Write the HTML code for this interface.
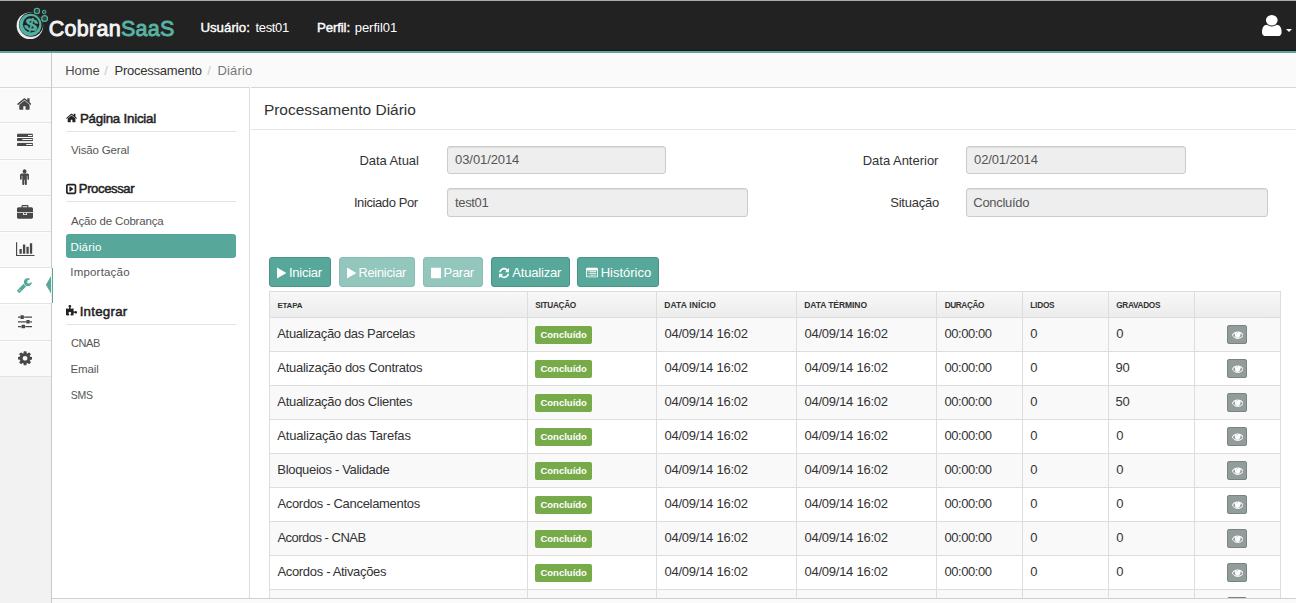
<!DOCTYPE html>
<html lang="pt-BR"><head><meta charset="utf-8"><title>CobranSaaS</title>
<style>
*{box-sizing:border-box;margin:0;padding:0}
html,body{width:1296px;height:603px;overflow:hidden;background:#fff}
body{font-family:"Liberation Sans",sans-serif;font-size:13px;color:#333;position:relative}
.abs{position:absolute}
svg.i{display:block;position:absolute}
.t{position:absolute;white-space:nowrap;line-height:1}
#top{left:0;top:0;width:1296px;height:1px;background:#adadad}
#hdr{left:0;top:1px;width:1296px;height:50px;background:#222;border-bottom:1px solid #1b1717}
#hline{left:0;top:51px;width:1296px;height:2px;background:#57a89a}
#ribbon{left:0;top:53px;width:1296px;height:35px;background:#fafafa;border-top:1px solid #fff;border-bottom:1px solid #d6d6d6}
#left{left:0;top:88px;width:51px;height:515px;background:#f2f2f2}
#vline{left:51px;top:53px;width:1px;height:550px;background:#c9c9c9}
.nv{position:absolute;left:0;width:51px;background:#fafafa;border-top:1px solid #fdfdfd;border-bottom:1px solid #e3e3e3}
.nv.on{background:#fff;border-top-color:#fff}
#sub{left:52px;top:88px;width:198px;height:510px;background:#fff;border-right:1px solid #ddd}
#main{left:250px;top:88px;width:1046px;height:510px;background:#fff}
#foot{left:52px;top:598px;width:1244px;height:5px;background:#fafafa;border-top:1px solid #d0d0d0}
.sl{position:absolute;left:66px;width:170px;height:1px;background:#e3e3e3}
.inp{position:absolute;height:28px;background:#eee;border:1px solid #ccc;border-radius:3px;box-shadow:inset 0 1px 1px rgba(0,0,0,.075)}
.btn{position:absolute;top:257px;height:30px;border-radius:3px;background:#57a89a;border:1px solid #4a9486}
.btn.dis{background:#93c6bc;border-color:#8abdb3}
#tbl{left:269px;top:291px;width:1012px;height:320px;border-left:1px solid #ddd;border-top:1px solid #ddd}
.th{position:absolute;top:292px;height:26px;background:linear-gradient(#f8f8f8,#ececec);border-right:1px solid #ddd;border-bottom:1px solid #ddd}
.td{position:absolute;height:34px;border-right:1px solid #ddd;border-bottom:1px solid #ddd}
.odd{background:#f9f9f9}
.bdg{position:absolute;width:57px;height:18px;background:#77aa48;border-radius:2px}
.eye{position:absolute;width:20px;height:19px;background:#929c9a;border:1px solid #7a8583;border-radius:2px}
</style></head>
<body>
<header>
<div class="abs" id="hdr"></div>
<div class="abs" id="top"></div>
<div class="abs" id="hline"></div>
<svg class="abs" style="left:14px;top:6px" width="36" height="42" viewBox="0 0 36 42">
<circle cx="15.9" cy="19.75" r="13.3" fill="#ececec"/>
<circle cx="17" cy="18.7" r="12.1" fill="#222"/>
<circle cx="16.4" cy="18.95" r="11.1" fill="#52b0a0"/>
<circle cx="17.1" cy="18.3" r="8.2" fill="#222"/>
<text x="0" y="5.9" text-anchor="middle" transform="translate(17.3 18.5) rotate(14) scale(1.4 1)" font-family="Liberation Sans, sans-serif" font-weight="bold" font-size="17" fill="#52b0a0" stroke="#52b0a0" stroke-width="0.35">$</text>
<circle cx="22.9" cy="5" r="2.7" fill="#2c4a45" stroke="#52b0a0" stroke-width="1.1"/>
<circle cx="30.2" cy="6" r="1.8" fill="#2c4a45" stroke="#52b0a0" stroke-width="1"/>
<circle cx="30.6" cy="12.5" r="2.9" fill="#2c4a45" stroke="#52b0a0" stroke-width="1.2"/>
</svg>
<div class="t" id="logo" style="left:48.7px;top:19px;font-size:21.5px;color:#f4f4f4;letter-spacing:0.29px;-webkit-text-stroke:0.9px #f4f4f4">Cobran<span style="color:#57b3a2;-webkit-text-stroke:0.9px #57b3a2">SaaS</span></div>
<div class="t" style="left:200.4px;top:21px;font-size:13.3px;-webkit-text-stroke:0.4px #fff;letter-spacing:-0.01px;color:#fff;">Usuário:</div>
<div class="t" style="left:255.5px;top:21px;font-size:13px;letter-spacing:-0.35px;color:#fff;">test01</div>
<div class="t" style="left:316.9px;top:21px;font-size:13.3px;-webkit-text-stroke:0.4px #fff;letter-spacing:-0.13px;color:#fff;">Perfil:</div>
<div class="t" style="left:354.7px;top:21px;font-size:13px;letter-spacing:-0.02px;color:#fff;">perfil01</div>
<svg class="i" width="19.6" height="21.2" viewBox="0 -1408 1280 1536" preserveAspectRatio="none" style="left:1262.2px;top:15.3px"><path fill="#fff" transform="scale(1,-1)" d="M1280 137Q1280 28 1217.5 -50.0Q1155 -128 1067 -128H213Q125 -128 62.5 -50.0Q0 28 0 137Q0 222 8.5 297.5Q17 373 40.0 449.5Q63 526 98.5 580.5Q134 635 192.5 669.5Q251 704 327 704Q458 576 640.0 576.0Q822 576 953 704Q1029 704 1087.5 669.5Q1146 635 1181.5 580.5Q1217 526 1240.0 449.5Q1263 373 1271.5 297.5Q1280 222 1280 137ZM911.5 1295.5Q1024 1183 1024.0 1024.0Q1024 865 911.5 752.5Q799 640 640.0 640.0Q481 640 368.5 752.5Q256 865 256.0 1024.0Q256 1183 368.5 1295.5Q481 1408 640.0 1408.0Q799 1408 911.5 1295.5Z"/></svg>
<div class="abs" style="left:1286px;top:29px;width:0;height:0;border-left:3px solid transparent;border-right:3px solid transparent;border-top:3px solid #fff"></div>
</header>
<div id="ribbon-wrap">
<div class="abs" id="ribbon"></div>
<div class="t" style="left:65.3px;top:64px;font-size:13px;letter-spacing:-0.11px;color:#4c4c4c;">Home</div>
<div class="t" style="left:104.3px;top:64px;font-size:13px;letter-spacing:0.00px;color:#ccc;">/</div>
<div class="t" style="left:114.5px;top:64px;font-size:13px;letter-spacing:-0.23px;color:#333;">Processamento</div>
<div class="t" style="left:207.2px;top:64px;font-size:13px;letter-spacing:0.00px;color:#ccc;">/</div>
<div class="t" style="left:217.6px;top:64px;font-size:13px;letter-spacing:0.12px;color:#777;">Diário</div>
</div>
<nav>
<div class="abs" id="left"></div>
<div class="nv" style="top:88px;height:35px"></div>
<svg class="i" width="14.86" height="16" viewBox="0 -1536 1664 1792" style="left:16.62px;top:96.06px;"><path fill="#484848" transform="scale(1,-1)" d="M1408 544V64Q1408 38 1389.0 19.0Q1370 0 1344 0H960V384H704V0H320Q294 0 275.0 19.0Q256 38 256 64V544Q256 545 256.5 547.0Q257 549 257 550L832 1024L1407 550Q1408 548 1408 544ZM1631 613 1569 539Q1561 530 1548 528H1545Q1532 528 1524 535L832 1112L140 535Q128 527 116 528Q103 530 95 539L33 613Q25 623 26.0 636.5Q27 650 37 658L756 1257Q788 1283 832.0 1283.0Q876 1283 908 1257L1152 1053V1248Q1152 1262 1161.0 1271.0Q1170 1280 1184 1280H1376Q1390 1280 1399.0 1271.0Q1408 1262 1408 1248V840L1627 658Q1637 650 1638.0 636.5Q1639 623 1631 613Z"/></svg>
<div class="nv" style="top:123px;height:37px"></div>
<svg class="i" style="left:17px;top:133px" width="16" height="13" viewBox="0 0 16 13">
<rect x="0.5" y="0" width="15" height="1" fill="#484848" opacity=".3"/>
<rect x="0" y="1" width="16" height="3" rx="0.4" fill="#484848"/><rect x="11" y="2" width="4.3" height="1" fill="#f4f4f4"/>
<rect x="0" y="5" width="16" height="3" rx="0.4" fill="#484848"/><rect x="5.3" y="6" width="10" height="1" fill="#f4f4f4"/>
<rect x="0.5" y="8.3" width="15" height="1.4" fill="#484848" opacity=".15"/>
<rect x="0" y="10" width="16" height="3" rx="0.4" fill="#484848"/><rect x="9.2" y="11" width="6.1" height="1" fill="#f4f4f4"/>
</svg>
<div class="nv" style="top:160px;height:36px"></div>
<svg class="i" width="9.14" height="16" viewBox="0 -1536 1024 1792" style="left:19.93px;top:168.96px;"><path fill="#484848" transform="scale(1,-1)" d="M1024 832V416Q1024 376 996.0 348.0Q968 320 928.0 320.0Q888 320 860.0 348.0Q832 376 832 416V768H768V-144Q768 -190 735.0 -223.0Q702 -256 656.0 -256.0Q610 -256 577.0 -223.0Q544 -190 544 -144V320H480V-144Q480 -190 447.0 -223.0Q414 -256 368.0 -256.0Q322 -256 289.0 -223.0Q256 -190 256 -144V768H192V416Q192 376 164.0 348.0Q136 320 96.0 320.0Q56 320 28.0 348.0Q0 376 0 416V832Q0 912 56.0 968.0Q112 1024 192 1024H832Q912 1024 968.0 968.0Q1024 912 1024 832ZM670.5 1438.5Q736 1373 736.0 1280.0Q736 1187 670.5 1121.5Q605 1056 512.0 1056.0Q419 1056 353.5 1121.5Q288 1187 288.0 1280.0Q288 1373 353.5 1438.5Q419 1504 512.0 1504.0Q605 1504 670.5 1438.5Z"/></svg>
<div class="nv" style="top:196px;height:36px"></div>
<svg class="i" width="16.00" height="16" viewBox="0 -1536 1792 1792" style="left:17.05px;top:205.04px;"><path fill="#484848" transform="scale(1,-1)" d="M640 1280H1152V1408H640ZM1792 640V160Q1792 94 1745.0 47.0Q1698 0 1632 0H160Q94 0 47.0 47.0Q0 94 0 160V640H672V480Q672 454 691.0 435.0Q710 416 736 416H1056Q1082 416 1101.0 435.0Q1120 454 1120 480V640ZM1024 640V512H768V640ZM1792 1120V736H0V1120Q0 1186 47.0 1233.0Q94 1280 160 1280H512V1440Q512 1480 540.0 1508.0Q568 1536 608 1536H1184Q1224 1536 1252.0 1508.0Q1280 1480 1280 1440V1280H1632Q1698 1280 1745.0 1233.0Q1792 1186 1792 1120Z"/></svg>
<div class="nv" style="top:232px;height:36px"></div>
<svg class="i" width="18.51" height="16.2" viewBox="0 -1536 2048 1792" style="left:16.04px;top:240.90px;"><path fill="#484848" transform="scale(1,-1)" d="M640 640V128H384V640ZM1024 1152V128H768V1152ZM2048 0V-128H0V1408H128V0ZM1408 896V128H1152V896ZM1792 1280V128H1536V1280Z"/></svg>
<div class="nv on" style="top:268px;height:36px"></div>
<svg class="i" width="14.86" height="16" viewBox="0 -1536 1664 1792" style="left:16.99px;top:276.52px;"><path fill="#57a89a" transform="scale(1,-1)" d="M365.0 19.0Q384 38 384.0 64.0Q384 90 365.0 109.0Q346 128 320.0 128.0Q294 128 275.0 109.0Q256 90 256.0 64.0Q256 38 275.0 19.0Q294 0 320.0 0.0Q346 0 365.0 19.0ZM1028 484 346 -198Q309 -235 256 -235Q204 -235 165 -198L59 -90Q21 -54 21 0Q21 53 59 91L740 772Q779 674 854.5 598.5Q930 523 1028 484ZM1662 919Q1662 880 1639 813Q1592 679 1474.5 595.5Q1357 512 1216 512Q1031 512 899.5 643.5Q768 775 768.0 960.0Q768 1145 899.5 1276.5Q1031 1408 1216 1408Q1274 1408 1337.5 1391.5Q1401 1375 1445 1345Q1461 1334 1461.0 1317.0Q1461 1300 1445 1289L1152 1120V896L1345 789Q1350 792 1424.0 837.5Q1498 883 1559.5 918.5Q1621 954 1630 954Q1645 954 1653.5 944.0Q1662 934 1662 919Z"/></svg>
<div class="nv" style="top:304px;height:37px"></div>
<svg class="i" width="14.14" height="16.5" viewBox="0 -1536 1536 1792" style="left:18.03px;top:312.66px;"><path fill="#484848" transform="scale(1,-1)" d="M352 128V0H0V128ZM704 256Q730 256 749.0 237.0Q768 218 768 192V-64Q768 -90 749.0 -109.0Q730 -128 704 -128H448Q422 -128 403.0 -109.0Q384 -90 384 -64V192Q384 218 403.0 237.0Q422 256 448 256ZM864 640V512H0V640ZM224 1152V1024H0V1152ZM1536 128V0H800V128ZM576 1280Q602 1280 621.0 1261.0Q640 1242 640 1216V960Q640 934 621.0 915.0Q602 896 576 896H320Q294 896 275.0 915.0Q256 934 256 960V1216Q256 1242 275.0 1261.0Q294 1280 320 1280ZM1216 768Q1242 768 1261.0 749.0Q1280 730 1280 704V448Q1280 422 1261.0 403.0Q1242 384 1216 384H960Q934 384 915.0 403.0Q896 422 896 448V704Q896 730 915.0 749.0Q934 768 960 768ZM1536 640V512H1312V640ZM1536 1152V1024H672V1152Z"/></svg>
<div class="nv" style="top:341px;height:36px"></div>
<svg class="i" width="14.14" height="16.5" viewBox="0 -1536 1536 1792" style="left:17.93px;top:349.85px;"><path fill="#484848" transform="scale(1,-1)" d="M949.0 459.0Q1024 534 1024.0 640.0Q1024 746 949.0 821.0Q874 896 768.0 896.0Q662 896 587.0 821.0Q512 746 512.0 640.0Q512 534 587.0 459.0Q662 384 768.0 384.0Q874 384 949.0 459.0ZM1536 749V527Q1536 515 1528.0 504.0Q1520 493 1508 491L1323 463Q1304 409 1284 372Q1319 322 1391 234Q1401 222 1401.0 209.0Q1401 196 1392 186Q1365 149 1293.0 78.0Q1221 7 1199 7Q1187 7 1173 16L1035 124Q991 101 944 86Q928 -50 915 -100Q908 -128 879 -128H657Q643 -128 632.5 -119.5Q622 -111 621 -98L593 86Q544 102 503 123L362 16Q352 7 337 7Q323 7 312 18Q186 132 147 186Q140 196 140 209Q140 221 148 232Q163 253 199.0 298.5Q235 344 253 369Q226 419 212 468L29 495Q16 497 8.0 507.5Q0 518 0 531V753Q0 765 8.0 776.0Q16 787 27 789L213 817Q227 863 252 909Q212 966 145 1047Q135 1059 135 1071Q135 1081 144 1094Q170 1130 242.5 1201.5Q315 1273 337 1273Q350 1273 363 1263L501 1156Q545 1179 592 1194Q608 1330 621 1380Q628 1408 657 1408H879Q893 1408 903.5 1399.5Q914 1391 915 1378L943 1194Q992 1178 1033 1157L1175 1264Q1184 1273 1199 1273Q1212 1273 1224 1263Q1353 1144 1389 1093Q1396 1085 1396 1071Q1396 1059 1388 1048Q1373 1027 1337.0 981.5Q1301 936 1283 911Q1309 861 1324 813L1507 785Q1520 783 1528.0 772.5Q1536 762 1536 749Z"/></svg>
<div class="abs" id="vline"></div>
</nav>
<aside>
<div class="abs" id="sub"></div>
<div class="abs" style="left:51px;top:268px;width:1px;height:35px;background:#f3eded"></div>
<div class="abs" style="left:52px;top:268px;width:1px;height:35px;background:#57a89a"></div>
<svg class="i" style="left:45px;top:275px" width="6" height="20" viewBox="0 0 6 20"><polygon points="6,1 6,18.5 0.9,9.75" fill="#57a89a"/></svg>
<svg class="i" width="11.14" height="12" viewBox="0 -1536 1664 1792" style="left:66.13px;top:112.21px;"><path fill="#222" transform="scale(1,-1)" d="M1408 544V64Q1408 38 1389.0 19.0Q1370 0 1344 0H960V384H704V0H320Q294 0 275.0 19.0Q256 38 256 64V544Q256 545 256.5 547.0Q257 549 257 550L832 1024L1407 550Q1408 548 1408 544ZM1631 613 1569 539Q1561 530 1548 528H1545Q1532 528 1524 535L832 1112L140 535Q128 527 116 528Q103 530 95 539L33 613Q25 623 26.0 636.5Q27 650 37 658L756 1257Q788 1283 832.0 1283.0Q876 1283 908 1257L1152 1053V1248Q1152 1262 1161.0 1271.0Q1170 1280 1184 1280H1376Q1390 1280 1399.0 1271.0Q1408 1262 1408 1248V840L1627 658Q1637 650 1638.0 636.5Q1639 623 1631 613Z"/></svg>
<div class="t" style="left:79.9px;top:112px;font-size:13.3px;-webkit-text-stroke:0.5px #222;letter-spacing:-0.21px;color:#222;">Página Inicial</div>
<div class="sl" style="top:131px"></div>
<div class="t" style="left:70.9px;top:145px;font-size:11.5px;letter-spacing:-0.14px;color:#555;">Visão Geral</div>
<svg class="i" width="10.29" height="12" viewBox="0 -1536 1536 1792" style="left:66.30px;top:182.74px;"><path fill="#222" transform="scale(1,-1)" d="M1061 588 613 268Q582 245 547 263Q512 280 512 320V960Q512 1000 547 1017Q582 1035 613 1012L1061 692Q1088 673 1088.0 640.0Q1088 607 1061 588ZM1280 160V1120Q1280 1134 1271.0 1143.0Q1262 1152 1248 1152H288Q274 1152 265.0 1143.0Q256 1134 256 1120V160Q256 146 265.0 137.0Q274 128 288 128H1248Q1262 128 1271.0 137.0Q1280 146 1280 160ZM1536 1120V160Q1536 41 1451.5 -43.5Q1367 -128 1248 -128H288Q169 -128 84.5 -43.5Q0 41 0 160V1120Q0 1239 84.5 1323.5Q169 1408 288 1408H1248Q1367 1408 1451.5 1323.5Q1536 1239 1536 1120Z"/></svg>
<div class="t" style="left:78.8px;top:182px;font-size:13.05px;-webkit-text-stroke:0.5px #222;letter-spacing:-0.37px;color:#222;">Processar</div>
<div class="sl" style="top:201px"></div>
<div class="t" style="left:70.9px;top:216px;font-size:11.5px;letter-spacing:-0.16px;color:#555;">Ação de Cobrança</div>
<div class="abs" style="left:66px;top:234px;width:170px;height:24px;background:#57a89a;border-radius:3px"></div>
<div class="t" style="left:70.4px;top:242px;font-size:11.5px;letter-spacing:0.18px;color:#fff;">Diário</div>
<div class="t" style="left:70.3px;top:267px;font-size:11.5px;letter-spacing:0.19px;color:#555;">Importação</div>
<svg class="i" width="11.14" height="12" viewBox="0 -1536 1664 1792" style="left:65.90px;top:304.90px;"><path fill="#222" transform="scale(1,-1)" d="M1664 438Q1664 357 1619.5 303.0Q1575 249 1496 249Q1455 249 1418.5 266.5Q1382 284 1359.5 304.5Q1337 325 1303.0 342.5Q1269 360 1232 360Q1122 360 1122 236Q1122 197 1138.0 121.0Q1154 45 1153 6V1Q1131 1 1120 0Q1086 -3 1022.5 -11.5Q959 -20 907.0 -25.0Q855 -30 809 -30Q748 -30 706.0 -3.5Q664 23 664 80Q664 117 681.5 151.0Q699 185 719.5 207.5Q740 230 757.5 266.5Q775 303 775 344Q775 423 721.0 467.5Q667 512 586 512Q502 512 443.0 466.5Q384 421 384 339Q384 296 399.0 256.0Q414 216 432.5 191.5Q451 167 466.0 138.5Q481 110 481 88Q481 43 435 -1Q398 -36 318 -36Q223 -36 73 -12Q64 -10 45.5 -8.0Q27 -6 18 -4L5 -2Q4 -2 2 -1Q0 -1 0 0V1024Q2 1023 17.5 1020.5Q33 1018 51.5 1015.5Q70 1013 73 1012Q223 988 318 988Q398 988 435 1023Q481 1067 481 1112Q481 1134 466.0 1162.5Q451 1191 432.5 1215.5Q414 1240 399.0 1280.0Q384 1320 384 1363Q384 1445 443.0 1490.5Q502 1536 587 1536Q667 1536 721.0 1491.5Q775 1447 775 1368Q775 1327 757.5 1290.5Q740 1254 719.5 1231.5Q699 1209 681.5 1175.0Q664 1141 664 1104Q664 1047 706.0 1020.5Q748 994 809 994Q873 994 989.0 1009.0Q1105 1024 1152 1026V1024Q1151 1022 1148.5 1006.5Q1146 991 1143.5 972.5Q1141 954 1140 951Q1116 801 1116 706Q1116 626 1151 589Q1195 543 1240 543Q1262 543 1290.5 558.0Q1319 573 1343.5 591.5Q1368 610 1408.0 625.0Q1448 640 1491 640Q1573 640 1618.5 581.0Q1664 522 1664 438Z"/></svg>
<div class="t" style="left:79.7px;top:305px;font-size:13.3px;-webkit-text-stroke:0.5px #222;letter-spacing:0.24px;color:#222;">Integrar</div>
<div class="sl" style="top:324px"></div>
<div class="t" style="left:70.9px;top:338px;font-size:11.0px;letter-spacing:-0.34px;color:#555;">CNAB</div>
<div class="t" style="left:70.5px;top:364px;font-size:11.5px;letter-spacing:-0.13px;color:#555;">Email</div>
<div class="t" style="left:70.7px;top:390px;font-size:10.5px;letter-spacing:-0.21px;color:#555;">SMS</div>
</aside>
<main>
<div class="abs" id="main"></div>
<div class="t" style="left:263.9px;top:102px;font-size:15.5px;letter-spacing:-0.03px;color:#333;">Processamento Diário</div>
<div class="abs" style="left:251px;top:129px;width:1045px;height:1px;background:#e5e5e5"></div>
<div class="abs" style="left:250px;top:87px;width:1px;height:1px;background:#fff"></div>
<div class="t" style="left:359.4px;top:154px;font-size:13px;letter-spacing:-0.05px;color:#333;">Data Atual</div>
<div class="inp" style="left:447px;top:146px;width:219px;height:28px"></div>
<div class="t" style="left:455.1px;top:153px;font-size:13px;letter-spacing:-0.09px;color:#555;">03/01/2014</div>
<div class="t" style="left:353.9px;top:196px;font-size:13px;letter-spacing:-0.40px;color:#333;">Iniciado Por</div>
<div class="inp" style="left:447px;top:188px;width:301px;height:29px"></div>
<div class="t" style="left:455.1px;top:196px;font-size:13px;letter-spacing:-0.37px;color:#555;">test01</div>
<div class="t" style="left:862.7px;top:154px;font-size:13px;letter-spacing:-0.01px;color:#333;">Data Anterior</div>
<div class="inp" style="left:966px;top:146px;width:220px;height:28px"></div>
<div class="t" style="left:974.1px;top:153px;font-size:13px;letter-spacing:-0.14px;color:#555;">02/01/2014</div>
<div class="t" style="left:890.2px;top:196px;font-size:13px;letter-spacing:-0.21px;color:#333;">Situação</div>
<div class="inp" style="left:966px;top:188px;width:302px;height:29px"></div>
<div class="t" style="left:973.3px;top:196px;font-size:13px;letter-spacing:-0.30px;color:#555;">Concluído</div>
<div class="btn" style="left:269px;width:62px"></div>
<svg class="i" width="9.43" height="12" viewBox="0 -1536 1408 1792" style="left:276.90px;top:266.70px;"><path fill="#fff" transform="scale(1,-1)" d="M1384 609 56 -129Q33 -142 16.5 -132.0Q0 -122 0 -96V1376Q0 1402 16.5 1412.0Q33 1422 56 1409L1384 671Q1407 658 1407.0 640.0Q1407 622 1384 609Z"/></svg>
<div class="t" style="left:288.9px;top:266px;font-size:13px;letter-spacing:-0.24px;color:#fff;">Iniciar</div>
<div class="btn dis" style="left:339px;width:76px"></div>
<svg class="i" width="9.43" height="12" viewBox="0 -1536 1408 1792" style="left:346.90px;top:266.70px;"><path fill="#fff" transform="scale(1,-1)" d="M1384 609 56 -129Q33 -142 16.5 -132.0Q0 -122 0 -96V1376Q0 1402 16.5 1412.0Q33 1422 56 1409L1384 671Q1407 658 1407.0 640.0Q1407 622 1384 609Z"/></svg>
<div class="t" style="left:358.4px;top:267px;font-size:12.75px;letter-spacing:-0.21px;color:#fff;">Reiniciar</div>
<div class="btn dis" style="left:423px;width:60px"></div>
<svg class="i" width="10.29" height="12" viewBox="0 -1536 1536 1792" style="left:430.80px;top:266.74px;"><path fill="#fff" transform="scale(1,-1)" d="M1536 1344V-64Q1536 -90 1517.0 -109.0Q1498 -128 1472 -128H64Q38 -128 19.0 -109.0Q0 -90 0 -64V1344Q0 1370 19.0 1389.0Q38 1408 64 1408H1472Q1498 1408 1517.0 1389.0Q1536 1370 1536 1344Z"/></svg>
<div class="t" style="left:443.5px;top:266px;font-size:13px;letter-spacing:-0.28px;color:#fff;">Parar</div>
<div class="btn" style="left:491px;width:79px"></div>
<svg class="i" width="10.29" height="12" viewBox="0 -1536 1536 1792" style="left:498.90px;top:266.74px;"><path fill="#fff" transform="scale(1,-1)" d="M1511 480Q1511 475 1510 473Q1446 205 1242.0 38.5Q1038 -128 764 -128Q618 -128 481.5 -73.0Q345 -18 238 84L109 -45Q90 -64 64.0 -64.0Q38 -64 19.0 -45.0Q0 -26 0 0V448Q0 474 19.0 493.0Q38 512 64 512H512Q538 512 557.0 493.0Q576 474 576.0 448.0Q576 422 557 403L420 266Q491 200 581.0 164.0Q671 128 768 128Q902 128 1018.0 193.0Q1134 258 1204 372Q1215 389 1257 489Q1265 512 1287 512H1479Q1492 512 1501.5 502.5Q1511 493 1511 480ZM1536 1280V832Q1536 806 1517.0 787.0Q1498 768 1472 768H1024Q998 768 979.0 787.0Q960 806 960.0 832.0Q960 858 979 877L1117 1015Q969 1152 768 1152Q634 1152 518.0 1087.0Q402 1022 332 908Q321 891 279 791Q271 768 249 768H50Q37 768 27.5 777.5Q18 787 18 800V807Q83 1075 288.0 1241.5Q493 1408 768 1408Q914 1408 1052.0 1352.5Q1190 1297 1297 1196L1427 1325Q1446 1344 1472.0 1344.0Q1498 1344 1517.0 1325.0Q1536 1306 1536 1280Z"/></svg>
<div class="t" style="left:512.2px;top:266px;font-size:13px;letter-spacing:-0.17px;color:#fff;">Atualizar</div>
<div class="btn" style="left:577px;width:82px"></div>
<svg class="i" width="12.00" height="12" viewBox="0 -1536 1792 1792" style="left:585.70px;top:266.74px;"><path fill="#fff" transform="scale(1,-1)" d="M384 352V288Q384 275 374.5 265.5Q365 256 352 256H288Q275 256 265.5 265.5Q256 275 256 288V352Q256 365 265.5 374.5Q275 384 288 384H352Q365 384 374.5 374.5Q384 365 384 352ZM384 608V544Q384 531 374.5 521.5Q365 512 352 512H288Q275 512 265.5 521.5Q256 531 256 544V608Q256 621 265.5 630.5Q275 640 288 640H352Q365 640 374.5 630.5Q384 621 384 608ZM384 864V800Q384 787 374.5 777.5Q365 768 352 768H288Q275 768 265.5 777.5Q256 787 256 800V864Q256 877 265.5 886.5Q275 896 288 896H352Q365 896 374.5 886.5Q384 877 384 864ZM1536 352V288Q1536 275 1526.5 265.5Q1517 256 1504 256H544Q531 256 521.5 265.5Q512 275 512 288V352Q512 365 521.5 374.5Q531 384 544 384H1504Q1517 384 1526.5 374.5Q1536 365 1536 352ZM1536 608V544Q1536 531 1526.5 521.5Q1517 512 1504 512H544Q531 512 521.5 521.5Q512 531 512 544V608Q512 621 521.5 630.5Q531 640 544 640H1504Q1517 640 1526.5 630.5Q1536 621 1536 608ZM1536 864V800Q1536 787 1526.5 777.5Q1517 768 1504 768H544Q531 768 521.5 777.5Q512 787 512 800V864Q512 877 521.5 886.5Q531 896 544 896H1504Q1517 896 1526.5 886.5Q1536 877 1536 864ZM1664 160V992Q1664 1005 1654.5 1014.5Q1645 1024 1632 1024H160Q147 1024 137.5 1014.5Q128 1005 128 992V160Q128 147 137.5 137.5Q147 128 160 128H1632Q1645 128 1654.5 137.5Q1664 147 1664 160ZM1792 1248V160Q1792 94 1745.0 47.0Q1698 0 1632 0H160Q94 0 47.0 47.0Q0 94 0 160V1248Q0 1314 47.0 1361.0Q94 1408 160 1408H1632Q1698 1408 1745.0 1361.0Q1792 1314 1792 1248Z"/></svg>
<div class="t" style="left:600.7px;top:266px;font-size:13px;letter-spacing:-0.01px;color:#fff;">Histórico</div>
<div class="abs" id="tbl"></div>
<div class="th" style="left:270px;width:258px"></div>
<div class="th" style="left:528px;width:129px"></div>
<div class="th" style="left:657px;width:140px"></div>
<div class="th" style="left:797px;width:140px"></div>
<div class="th" style="left:937px;width:86px"></div>
<div class="th" style="left:1023px;width:86px"></div>
<div class="th" style="left:1109px;width:86px"></div>
<div class="th" style="left:1195px;width:86px"></div>
<div class="t" style="left:277.4px;top:302px;font-size:8.0px;font-weight:bold;letter-spacing:-0.21px;color:#333;">ETAPA</div>
<div class="t" style="left:535.3px;top:302px;font-size:8.25px;font-weight:bold;letter-spacing:-0.30px;color:#333;">SITUAÇÃO</div>
<div class="t" style="left:664.2px;top:301px;font-size:8.5px;font-weight:bold;letter-spacing:0.14px;color:#333;">DATA INÍCIO</div>
<div class="t" style="left:804.2px;top:301px;font-size:8.5px;font-weight:bold;letter-spacing:-0.07px;color:#333;">DATA TÉRMINO</div>
<div class="t" style="left:944.7px;top:302px;font-size:8.25px;font-weight:bold;letter-spacing:-0.40px;color:#333;">DURAÇÃO</div>
<div class="t" style="left:1030.3px;top:302px;font-size:8.25px;font-weight:bold;letter-spacing:-0.23px;color:#333;">LIDOS</div>
<div class="t" style="left:1116.2px;top:302px;font-size:8.25px;font-weight:bold;letter-spacing:-0.32px;color:#333;">GRAVADOS</div>
<div class="td odd" style="left:270px;top:318px;width:258px"></div>
<div class="td odd" style="left:528px;top:318px;width:129px"></div>
<div class="td odd" style="left:657px;top:318px;width:140px"></div>
<div class="td odd" style="left:797px;top:318px;width:140px"></div>
<div class="td odd" style="left:937px;top:318px;width:86px"></div>
<div class="td odd" style="left:1023px;top:318px;width:86px"></div>
<div class="td odd" style="left:1109px;top:318px;width:86px"></div>
<div class="td odd" style="left:1195px;top:318px;width:86px"></div>
<div class="t" style="left:277.3px;top:327px;font-size:13px;letter-spacing:-0.35px;color:#333;">Atualização das Parcelas</div>
<div class="bdg" style="left:535px;top:326px"></div>
<div class="t" style="left:540.4px;top:330px;font-size:9.5px;font-weight:bold;letter-spacing:0.01px;color:#fff;">Concluído</div>
<div class="t" style="left:664.5px;top:327px;font-size:13px;letter-spacing:-0.25px;color:#333;">04/09/14 16:02</div>
<div class="t" style="left:804.5px;top:327px;font-size:13px;letter-spacing:-0.25px;color:#333;">04/09/14 16:02</div>
<div class="t" style="left:944.4px;top:327px;font-size:13px;letter-spacing:-0.42px;color:#333;">00:00:00</div>
<div class="t" style="left:1030.3px;top:327px;font-size:13px;letter-spacing:0.00px;color:#333;">0</div>
<div class="t" style="left:1116.3px;top:327px;font-size:13px;letter-spacing:-0.20px;color:#333;">0</div>
<div class="eye" style="left:1227px;top:325px"></div>
<svg class="i" width="11.50" height="11.5" viewBox="0 -1536 1792 1792" style="left:1231.65px;top:329.14px;"><path fill="#fff" transform="scale(1,-1)" d="M1664 576Q1512 812 1283 929Q1344 825 1344 704Q1344 519 1212.5 387.5Q1081 256 896.0 256.0Q711 256 579.5 387.5Q448 519 448 704Q448 825 509 929Q280 812 128 576Q261 371 461.5 249.5Q662 128 896.0 128.0Q1130 128 1330.5 249.5Q1531 371 1664 576ZM896 1008Q771 1008 681.5 918.5Q592 829 592 704Q592 684 606.0 670.0Q620 656 640.0 656.0Q660 656 674.0 670.0Q688 684 688 704Q688 790 749.0 851.0Q810 912 896 912Q916 912 930.0 926.0Q944 940 944.0 960.0Q944 980 930.0 994.0Q916 1008 896 1008ZM1772 507Q1632 277 1395.5 138.5Q1159 0 896.0 0.0Q633 0 396.5 139.0Q160 278 20 507Q0 542 0.0 576.0Q0 610 20 645Q160 874 396.5 1013.0Q633 1152 896.0 1152.0Q1159 1152 1395.5 1013.0Q1632 874 1772 645Q1792 610 1792.0 576.0Q1792 542 1772 507Z"/></svg>
<div class="abs" style="left:1235.3px;top:333.2px;width:4.4px;height:4.4px;border-radius:50%;background:rgba(255,255,255,.8)"></div>
<div class="td" style="left:270px;top:352px;width:258px"></div>
<div class="td" style="left:528px;top:352px;width:129px"></div>
<div class="td" style="left:657px;top:352px;width:140px"></div>
<div class="td" style="left:797px;top:352px;width:140px"></div>
<div class="td" style="left:937px;top:352px;width:86px"></div>
<div class="td" style="left:1023px;top:352px;width:86px"></div>
<div class="td" style="left:1109px;top:352px;width:86px"></div>
<div class="td" style="left:1195px;top:352px;width:86px"></div>
<div class="t" style="left:277.3px;top:361px;font-size:13px;letter-spacing:-0.27px;color:#333;">Atualização dos Contratos</div>
<div class="bdg" style="left:535px;top:360px"></div>
<div class="t" style="left:540.4px;top:364px;font-size:9.5px;font-weight:bold;letter-spacing:0.01px;color:#fff;">Concluído</div>
<div class="t" style="left:664.5px;top:361px;font-size:13px;letter-spacing:-0.25px;color:#333;">04/09/14 16:02</div>
<div class="t" style="left:804.5px;top:361px;font-size:13px;letter-spacing:-0.25px;color:#333;">04/09/14 16:02</div>
<div class="t" style="left:944.4px;top:361px;font-size:13px;letter-spacing:-0.42px;color:#333;">00:00:00</div>
<div class="t" style="left:1030.3px;top:361px;font-size:13px;letter-spacing:0.00px;color:#333;">0</div>
<div class="t" style="left:1115.6px;top:361px;font-size:13px;letter-spacing:-0.20px;color:#333;">90</div>
<div class="eye" style="left:1227px;top:359px"></div>
<svg class="i" width="11.50" height="11.5" viewBox="0 -1536 1792 1792" style="left:1231.65px;top:363.14px;"><path fill="#fff" transform="scale(1,-1)" d="M1664 576Q1512 812 1283 929Q1344 825 1344 704Q1344 519 1212.5 387.5Q1081 256 896.0 256.0Q711 256 579.5 387.5Q448 519 448 704Q448 825 509 929Q280 812 128 576Q261 371 461.5 249.5Q662 128 896.0 128.0Q1130 128 1330.5 249.5Q1531 371 1664 576ZM896 1008Q771 1008 681.5 918.5Q592 829 592 704Q592 684 606.0 670.0Q620 656 640.0 656.0Q660 656 674.0 670.0Q688 684 688 704Q688 790 749.0 851.0Q810 912 896 912Q916 912 930.0 926.0Q944 940 944.0 960.0Q944 980 930.0 994.0Q916 1008 896 1008ZM1772 507Q1632 277 1395.5 138.5Q1159 0 896.0 0.0Q633 0 396.5 139.0Q160 278 20 507Q0 542 0.0 576.0Q0 610 20 645Q160 874 396.5 1013.0Q633 1152 896.0 1152.0Q1159 1152 1395.5 1013.0Q1632 874 1772 645Q1792 610 1792.0 576.0Q1792 542 1772 507Z"/></svg>
<div class="abs" style="left:1235.3px;top:367.2px;width:4.4px;height:4.4px;border-radius:50%;background:rgba(255,255,255,.8)"></div>
<div class="td odd" style="left:270px;top:386px;width:258px"></div>
<div class="td odd" style="left:528px;top:386px;width:129px"></div>
<div class="td odd" style="left:657px;top:386px;width:140px"></div>
<div class="td odd" style="left:797px;top:386px;width:140px"></div>
<div class="td odd" style="left:937px;top:386px;width:86px"></div>
<div class="td odd" style="left:1023px;top:386px;width:86px"></div>
<div class="td odd" style="left:1109px;top:386px;width:86px"></div>
<div class="td odd" style="left:1195px;top:386px;width:86px"></div>
<div class="t" style="left:277.3px;top:395px;font-size:13px;letter-spacing:-0.31px;color:#333;">Atualização dos Clientes</div>
<div class="bdg" style="left:535px;top:394px"></div>
<div class="t" style="left:540.4px;top:398px;font-size:9.5px;font-weight:bold;letter-spacing:0.01px;color:#fff;">Concluído</div>
<div class="t" style="left:664.5px;top:395px;font-size:13px;letter-spacing:-0.25px;color:#333;">04/09/14 16:02</div>
<div class="t" style="left:804.5px;top:395px;font-size:13px;letter-spacing:-0.25px;color:#333;">04/09/14 16:02</div>
<div class="t" style="left:944.4px;top:395px;font-size:13px;letter-spacing:-0.42px;color:#333;">00:00:00</div>
<div class="t" style="left:1030.3px;top:395px;font-size:13px;letter-spacing:0.00px;color:#333;">0</div>
<div class="t" style="left:1115.5px;top:395px;font-size:13px;letter-spacing:-0.20px;color:#333;">50</div>
<div class="eye" style="left:1227px;top:393px"></div>
<svg class="i" width="11.50" height="11.5" viewBox="0 -1536 1792 1792" style="left:1231.65px;top:397.14px;"><path fill="#fff" transform="scale(1,-1)" d="M1664 576Q1512 812 1283 929Q1344 825 1344 704Q1344 519 1212.5 387.5Q1081 256 896.0 256.0Q711 256 579.5 387.5Q448 519 448 704Q448 825 509 929Q280 812 128 576Q261 371 461.5 249.5Q662 128 896.0 128.0Q1130 128 1330.5 249.5Q1531 371 1664 576ZM896 1008Q771 1008 681.5 918.5Q592 829 592 704Q592 684 606.0 670.0Q620 656 640.0 656.0Q660 656 674.0 670.0Q688 684 688 704Q688 790 749.0 851.0Q810 912 896 912Q916 912 930.0 926.0Q944 940 944.0 960.0Q944 980 930.0 994.0Q916 1008 896 1008ZM1772 507Q1632 277 1395.5 138.5Q1159 0 896.0 0.0Q633 0 396.5 139.0Q160 278 20 507Q0 542 0.0 576.0Q0 610 20 645Q160 874 396.5 1013.0Q633 1152 896.0 1152.0Q1159 1152 1395.5 1013.0Q1632 874 1772 645Q1792 610 1792.0 576.0Q1792 542 1772 507Z"/></svg>
<div class="abs" style="left:1235.3px;top:401.2px;width:4.4px;height:4.4px;border-radius:50%;background:rgba(255,255,255,.8)"></div>
<div class="td" style="left:270px;top:420px;width:258px"></div>
<div class="td" style="left:528px;top:420px;width:129px"></div>
<div class="td" style="left:657px;top:420px;width:140px"></div>
<div class="td" style="left:797px;top:420px;width:140px"></div>
<div class="td" style="left:937px;top:420px;width:86px"></div>
<div class="td" style="left:1023px;top:420px;width:86px"></div>
<div class="td" style="left:1109px;top:420px;width:86px"></div>
<div class="td" style="left:1195px;top:420px;width:86px"></div>
<div class="t" style="left:277.3px;top:429px;font-size:13px;letter-spacing:-0.19px;color:#333;">Atualização das Tarefas</div>
<div class="bdg" style="left:535px;top:428px"></div>
<div class="t" style="left:540.4px;top:432px;font-size:9.5px;font-weight:bold;letter-spacing:0.01px;color:#fff;">Concluído</div>
<div class="t" style="left:664.5px;top:429px;font-size:13px;letter-spacing:-0.25px;color:#333;">04/09/14 16:02</div>
<div class="t" style="left:804.5px;top:429px;font-size:13px;letter-spacing:-0.25px;color:#333;">04/09/14 16:02</div>
<div class="t" style="left:944.4px;top:429px;font-size:13px;letter-spacing:-0.42px;color:#333;">00:00:00</div>
<div class="t" style="left:1030.3px;top:429px;font-size:13px;letter-spacing:0.00px;color:#333;">0</div>
<div class="t" style="left:1116.3px;top:429px;font-size:13px;letter-spacing:-0.20px;color:#333;">0</div>
<div class="eye" style="left:1227px;top:427px"></div>
<svg class="i" width="11.50" height="11.5" viewBox="0 -1536 1792 1792" style="left:1231.65px;top:431.14px;"><path fill="#fff" transform="scale(1,-1)" d="M1664 576Q1512 812 1283 929Q1344 825 1344 704Q1344 519 1212.5 387.5Q1081 256 896.0 256.0Q711 256 579.5 387.5Q448 519 448 704Q448 825 509 929Q280 812 128 576Q261 371 461.5 249.5Q662 128 896.0 128.0Q1130 128 1330.5 249.5Q1531 371 1664 576ZM896 1008Q771 1008 681.5 918.5Q592 829 592 704Q592 684 606.0 670.0Q620 656 640.0 656.0Q660 656 674.0 670.0Q688 684 688 704Q688 790 749.0 851.0Q810 912 896 912Q916 912 930.0 926.0Q944 940 944.0 960.0Q944 980 930.0 994.0Q916 1008 896 1008ZM1772 507Q1632 277 1395.5 138.5Q1159 0 896.0 0.0Q633 0 396.5 139.0Q160 278 20 507Q0 542 0.0 576.0Q0 610 20 645Q160 874 396.5 1013.0Q633 1152 896.0 1152.0Q1159 1152 1395.5 1013.0Q1632 874 1772 645Q1792 610 1792.0 576.0Q1792 542 1772 507Z"/></svg>
<div class="abs" style="left:1235.3px;top:435.2px;width:4.4px;height:4.4px;border-radius:50%;background:rgba(255,255,255,.8)"></div>
<div class="td odd" style="left:270px;top:454px;width:258px"></div>
<div class="td odd" style="left:528px;top:454px;width:129px"></div>
<div class="td odd" style="left:657px;top:454px;width:140px"></div>
<div class="td odd" style="left:797px;top:454px;width:140px"></div>
<div class="td odd" style="left:937px;top:454px;width:86px"></div>
<div class="td odd" style="left:1023px;top:454px;width:86px"></div>
<div class="td odd" style="left:1109px;top:454px;width:86px"></div>
<div class="td odd" style="left:1195px;top:454px;width:86px"></div>
<div class="t" style="left:277.3px;top:463px;font-size:13px;letter-spacing:-0.31px;color:#333;">Bloqueios - Validade</div>
<div class="bdg" style="left:535px;top:462px"></div>
<div class="t" style="left:540.4px;top:466px;font-size:9.5px;font-weight:bold;letter-spacing:0.01px;color:#fff;">Concluído</div>
<div class="t" style="left:664.5px;top:463px;font-size:13px;letter-spacing:-0.25px;color:#333;">04/09/14 16:02</div>
<div class="t" style="left:804.5px;top:463px;font-size:13px;letter-spacing:-0.25px;color:#333;">04/09/14 16:02</div>
<div class="t" style="left:944.4px;top:463px;font-size:13px;letter-spacing:-0.42px;color:#333;">00:00:00</div>
<div class="t" style="left:1030.3px;top:463px;font-size:13px;letter-spacing:0.00px;color:#333;">0</div>
<div class="t" style="left:1116.3px;top:463px;font-size:13px;letter-spacing:-0.20px;color:#333;">0</div>
<div class="eye" style="left:1227px;top:461px"></div>
<svg class="i" width="11.50" height="11.5" viewBox="0 -1536 1792 1792" style="left:1231.65px;top:465.14px;"><path fill="#fff" transform="scale(1,-1)" d="M1664 576Q1512 812 1283 929Q1344 825 1344 704Q1344 519 1212.5 387.5Q1081 256 896.0 256.0Q711 256 579.5 387.5Q448 519 448 704Q448 825 509 929Q280 812 128 576Q261 371 461.5 249.5Q662 128 896.0 128.0Q1130 128 1330.5 249.5Q1531 371 1664 576ZM896 1008Q771 1008 681.5 918.5Q592 829 592 704Q592 684 606.0 670.0Q620 656 640.0 656.0Q660 656 674.0 670.0Q688 684 688 704Q688 790 749.0 851.0Q810 912 896 912Q916 912 930.0 926.0Q944 940 944.0 960.0Q944 980 930.0 994.0Q916 1008 896 1008ZM1772 507Q1632 277 1395.5 138.5Q1159 0 896.0 0.0Q633 0 396.5 139.0Q160 278 20 507Q0 542 0.0 576.0Q0 610 20 645Q160 874 396.5 1013.0Q633 1152 896.0 1152.0Q1159 1152 1395.5 1013.0Q1632 874 1772 645Q1792 610 1792.0 576.0Q1792 542 1772 507Z"/></svg>
<div class="abs" style="left:1235.3px;top:469.2px;width:4.4px;height:4.4px;border-radius:50%;background:rgba(255,255,255,.8)"></div>
<div class="td" style="left:270px;top:488px;width:258px"></div>
<div class="td" style="left:528px;top:488px;width:129px"></div>
<div class="td" style="left:657px;top:488px;width:140px"></div>
<div class="td" style="left:797px;top:488px;width:140px"></div>
<div class="td" style="left:937px;top:488px;width:86px"></div>
<div class="td" style="left:1023px;top:488px;width:86px"></div>
<div class="td" style="left:1109px;top:488px;width:86px"></div>
<div class="td" style="left:1195px;top:488px;width:86px"></div>
<div class="t" style="left:277.4px;top:497px;font-size:13px;letter-spacing:-0.31px;color:#333;">Acordos - Cancelamentos</div>
<div class="bdg" style="left:535px;top:496px"></div>
<div class="t" style="left:540.4px;top:500px;font-size:9.5px;font-weight:bold;letter-spacing:0.01px;color:#fff;">Concluído</div>
<div class="t" style="left:664.5px;top:497px;font-size:13px;letter-spacing:-0.25px;color:#333;">04/09/14 16:02</div>
<div class="t" style="left:804.5px;top:497px;font-size:13px;letter-spacing:-0.25px;color:#333;">04/09/14 16:02</div>
<div class="t" style="left:944.4px;top:497px;font-size:13px;letter-spacing:-0.42px;color:#333;">00:00:00</div>
<div class="t" style="left:1030.3px;top:497px;font-size:13px;letter-spacing:0.00px;color:#333;">0</div>
<div class="t" style="left:1116.3px;top:497px;font-size:13px;letter-spacing:-0.20px;color:#333;">0</div>
<div class="eye" style="left:1227px;top:495px"></div>
<svg class="i" width="11.50" height="11.5" viewBox="0 -1536 1792 1792" style="left:1231.65px;top:499.14px;"><path fill="#fff" transform="scale(1,-1)" d="M1664 576Q1512 812 1283 929Q1344 825 1344 704Q1344 519 1212.5 387.5Q1081 256 896.0 256.0Q711 256 579.5 387.5Q448 519 448 704Q448 825 509 929Q280 812 128 576Q261 371 461.5 249.5Q662 128 896.0 128.0Q1130 128 1330.5 249.5Q1531 371 1664 576ZM896 1008Q771 1008 681.5 918.5Q592 829 592 704Q592 684 606.0 670.0Q620 656 640.0 656.0Q660 656 674.0 670.0Q688 684 688 704Q688 790 749.0 851.0Q810 912 896 912Q916 912 930.0 926.0Q944 940 944.0 960.0Q944 980 930.0 994.0Q916 1008 896 1008ZM1772 507Q1632 277 1395.5 138.5Q1159 0 896.0 0.0Q633 0 396.5 139.0Q160 278 20 507Q0 542 0.0 576.0Q0 610 20 645Q160 874 396.5 1013.0Q633 1152 896.0 1152.0Q1159 1152 1395.5 1013.0Q1632 874 1772 645Q1792 610 1792.0 576.0Q1792 542 1772 507Z"/></svg>
<div class="abs" style="left:1235.3px;top:503.2px;width:4.4px;height:4.4px;border-radius:50%;background:rgba(255,255,255,.8)"></div>
<div class="td odd" style="left:270px;top:522px;width:258px"></div>
<div class="td odd" style="left:528px;top:522px;width:129px"></div>
<div class="td odd" style="left:657px;top:522px;width:140px"></div>
<div class="td odd" style="left:797px;top:522px;width:140px"></div>
<div class="td odd" style="left:937px;top:522px;width:86px"></div>
<div class="td odd" style="left:1023px;top:522px;width:86px"></div>
<div class="td odd" style="left:1109px;top:522px;width:86px"></div>
<div class="td odd" style="left:1195px;top:522px;width:86px"></div>
<div class="t" style="left:277.4px;top:531px;font-size:13px;letter-spacing:-0.51px;color:#333;">Acordos - CNAB</div>
<div class="bdg" style="left:535px;top:530px"></div>
<div class="t" style="left:540.4px;top:534px;font-size:9.5px;font-weight:bold;letter-spacing:0.01px;color:#fff;">Concluído</div>
<div class="t" style="left:664.5px;top:531px;font-size:13px;letter-spacing:-0.25px;color:#333;">04/09/14 16:02</div>
<div class="t" style="left:804.5px;top:531px;font-size:13px;letter-spacing:-0.25px;color:#333;">04/09/14 16:02</div>
<div class="t" style="left:944.4px;top:531px;font-size:13px;letter-spacing:-0.42px;color:#333;">00:00:00</div>
<div class="t" style="left:1030.3px;top:531px;font-size:13px;letter-spacing:0.00px;color:#333;">0</div>
<div class="t" style="left:1116.3px;top:531px;font-size:13px;letter-spacing:-0.20px;color:#333;">0</div>
<div class="eye" style="left:1227px;top:529px"></div>
<svg class="i" width="11.50" height="11.5" viewBox="0 -1536 1792 1792" style="left:1231.65px;top:533.14px;"><path fill="#fff" transform="scale(1,-1)" d="M1664 576Q1512 812 1283 929Q1344 825 1344 704Q1344 519 1212.5 387.5Q1081 256 896.0 256.0Q711 256 579.5 387.5Q448 519 448 704Q448 825 509 929Q280 812 128 576Q261 371 461.5 249.5Q662 128 896.0 128.0Q1130 128 1330.5 249.5Q1531 371 1664 576ZM896 1008Q771 1008 681.5 918.5Q592 829 592 704Q592 684 606.0 670.0Q620 656 640.0 656.0Q660 656 674.0 670.0Q688 684 688 704Q688 790 749.0 851.0Q810 912 896 912Q916 912 930.0 926.0Q944 940 944.0 960.0Q944 980 930.0 994.0Q916 1008 896 1008ZM1772 507Q1632 277 1395.5 138.5Q1159 0 896.0 0.0Q633 0 396.5 139.0Q160 278 20 507Q0 542 0.0 576.0Q0 610 20 645Q160 874 396.5 1013.0Q633 1152 896.0 1152.0Q1159 1152 1395.5 1013.0Q1632 874 1772 645Q1792 610 1792.0 576.0Q1792 542 1772 507Z"/></svg>
<div class="abs" style="left:1235.3px;top:537.2px;width:4.4px;height:4.4px;border-radius:50%;background:rgba(255,255,255,.8)"></div>
<div class="td" style="left:270px;top:556px;width:258px"></div>
<div class="td" style="left:528px;top:556px;width:129px"></div>
<div class="td" style="left:657px;top:556px;width:140px"></div>
<div class="td" style="left:797px;top:556px;width:140px"></div>
<div class="td" style="left:937px;top:556px;width:86px"></div>
<div class="td" style="left:1023px;top:556px;width:86px"></div>
<div class="td" style="left:1109px;top:556px;width:86px"></div>
<div class="td" style="left:1195px;top:556px;width:86px"></div>
<div class="t" style="left:277.4px;top:565px;font-size:13px;letter-spacing:-0.32px;color:#333;">Acordos - Ativações</div>
<div class="bdg" style="left:535px;top:564px"></div>
<div class="t" style="left:540.4px;top:568px;font-size:9.5px;font-weight:bold;letter-spacing:0.01px;color:#fff;">Concluído</div>
<div class="t" style="left:664.5px;top:565px;font-size:13px;letter-spacing:-0.25px;color:#333;">04/09/14 16:02</div>
<div class="t" style="left:804.5px;top:565px;font-size:13px;letter-spacing:-0.25px;color:#333;">04/09/14 16:02</div>
<div class="t" style="left:944.4px;top:565px;font-size:13px;letter-spacing:-0.42px;color:#333;">00:00:00</div>
<div class="t" style="left:1030.3px;top:565px;font-size:13px;letter-spacing:0.00px;color:#333;">0</div>
<div class="t" style="left:1116.3px;top:565px;font-size:13px;letter-spacing:-0.20px;color:#333;">0</div>
<div class="eye" style="left:1227px;top:563px"></div>
<svg class="i" width="11.50" height="11.5" viewBox="0 -1536 1792 1792" style="left:1231.65px;top:567.14px;"><path fill="#fff" transform="scale(1,-1)" d="M1664 576Q1512 812 1283 929Q1344 825 1344 704Q1344 519 1212.5 387.5Q1081 256 896.0 256.0Q711 256 579.5 387.5Q448 519 448 704Q448 825 509 929Q280 812 128 576Q261 371 461.5 249.5Q662 128 896.0 128.0Q1130 128 1330.5 249.5Q1531 371 1664 576ZM896 1008Q771 1008 681.5 918.5Q592 829 592 704Q592 684 606.0 670.0Q620 656 640.0 656.0Q660 656 674.0 670.0Q688 684 688 704Q688 790 749.0 851.0Q810 912 896 912Q916 912 930.0 926.0Q944 940 944.0 960.0Q944 980 930.0 994.0Q916 1008 896 1008ZM1772 507Q1632 277 1395.5 138.5Q1159 0 896.0 0.0Q633 0 396.5 139.0Q160 278 20 507Q0 542 0.0 576.0Q0 610 20 645Q160 874 396.5 1013.0Q633 1152 896.0 1152.0Q1159 1152 1395.5 1013.0Q1632 874 1772 645Q1792 610 1792.0 576.0Q1792 542 1772 507Z"/></svg>
<div class="abs" style="left:1235.3px;top:571.2px;width:4.4px;height:4.4px;border-radius:50%;background:rgba(255,255,255,.8)"></div>
<div class="td odd" style="left:270px;top:590px;width:258px"></div>
<div class="td odd" style="left:528px;top:590px;width:129px"></div>
<div class="td odd" style="left:657px;top:590px;width:140px"></div>
<div class="td odd" style="left:797px;top:590px;width:140px"></div>
<div class="td odd" style="left:937px;top:590px;width:86px"></div>
<div class="td odd" style="left:1023px;top:590px;width:86px"></div>
<div class="td odd" style="left:1109px;top:590px;width:86px"></div>
<div class="td odd" style="left:1195px;top:590px;width:86px"></div>
<div class="bdg" style="left:535px;top:598px"></div>
<div class="eye" style="left:1227px;top:597px"></div>
<svg class="i" width="11.50" height="11.5" viewBox="0 -1536 1792 1792" style="left:1231.65px;top:601.14px;"><path fill="#fff" transform="scale(1,-1)" d="M1664 576Q1512 812 1283 929Q1344 825 1344 704Q1344 519 1212.5 387.5Q1081 256 896.0 256.0Q711 256 579.5 387.5Q448 519 448 704Q448 825 509 929Q280 812 128 576Q261 371 461.5 249.5Q662 128 896.0 128.0Q1130 128 1330.5 249.5Q1531 371 1664 576ZM896 1008Q771 1008 681.5 918.5Q592 829 592 704Q592 684 606.0 670.0Q620 656 640.0 656.0Q660 656 674.0 670.0Q688 684 688 704Q688 790 749.0 851.0Q810 912 896 912Q916 912 930.0 926.0Q944 940 944.0 960.0Q944 980 930.0 994.0Q916 1008 896 1008ZM1772 507Q1632 277 1395.5 138.5Q1159 0 896.0 0.0Q633 0 396.5 139.0Q160 278 20 507Q0 542 0.0 576.0Q0 610 20 645Q160 874 396.5 1013.0Q633 1152 896.0 1152.0Q1159 1152 1395.5 1013.0Q1632 874 1772 645Q1792 610 1792.0 576.0Q1792 542 1772 507Z"/></svg>
<div class="abs" style="left:1235.3px;top:605.2px;width:4.4px;height:4.4px;border-radius:50%;background:rgba(255,255,255,.8)"></div>
</main>
<footer><div class="abs" id="foot"></div></footer>
</body></html>
